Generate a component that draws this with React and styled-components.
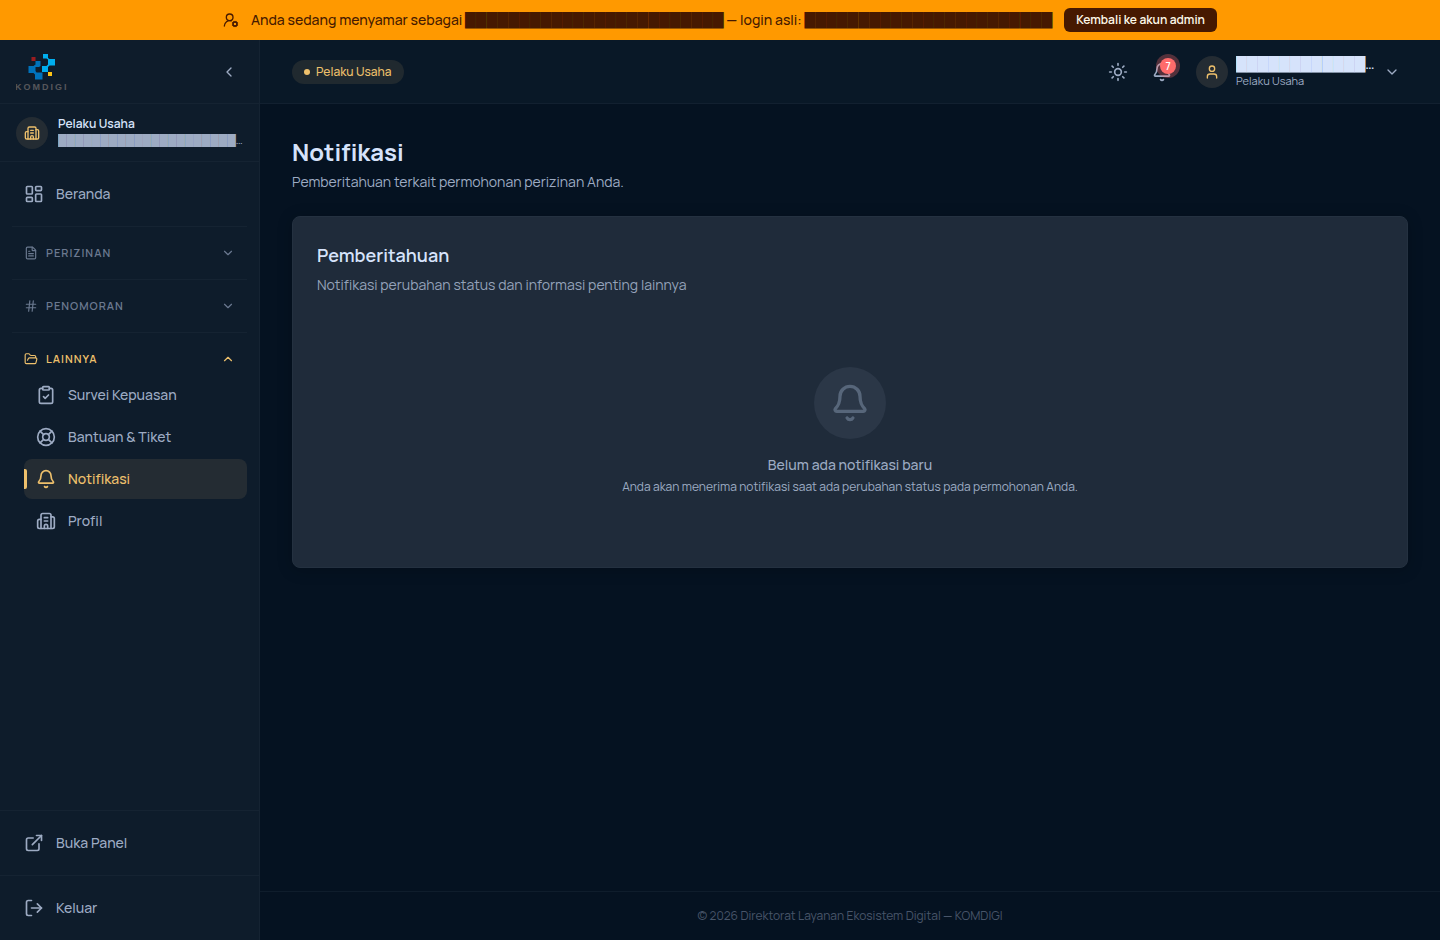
import React, { useState } from "react";
import styled, { createGlobalStyle } from "styled-components";
import {
  Bell,
  Building2,
  ChevronDown,
  ChevronLeft,
  ChevronUp,
  ClipboardCheck,
  ExternalLink,
  FileText,
  FolderOpen,
  Hash,
  LayoutDashboard,
  LifeBuoy,
  LogOut,
  Sun,
  User,
  UserRoundCog,
} from "lucide-react";

const GlobalStyle = createGlobalStyle`
  * {
    box-sizing: border-box;
  }
  body {
    margin: 0;
    background: #051221;
    color: #d6e3fb;
    font-family: "Manrope", "Inter", sans-serif;
    font-size: 14px;
    line-height: 20px;
  }
  h1, h2, p {
    margin: 0;
  }
  button {
    font: inherit;
    color: inherit;
    border: 0;
    padding: 0;
    background: none;
    cursor: pointer;
  }
  a {
    color: inherit;
    text-decoration: none;
  }
`;

const Page = styled.div`
  min-height: 100vh;
  display: flex;
  flex-direction: column;
`;

const Banner = styled.div`
  min-height: 40px;
  padding: 4px 16px;
  display: flex;
  align-items: center;
  justify-content: center;
  gap: 12px;
  background: #ff9900;
  color: #461901;
  font-weight: 500;
`;

const BannerButton = styled.button`
  height: 24px;
  padding: 0 12px;
  border-radius: 6px;
  background: #461901;
  color: #fffbeb;
  font-size: 12px;
  line-height: 16px;
  font-weight: 600;
`;

const Masked = styled.span`
  font-family: "DejaVu Sans", sans-serif;
`;

const Body = styled.div`
  flex: 1;
  display: flex;
`;

const Sidebar = styled.aside`
  width: 260px;
  flex-shrink: 0;
  display: flex;
  flex-direction: column;
  background: #0e1c2b;
  border-right: 1px solid #152332;
  color: #9dabc3;
`;

const SidebarTop = styled.div`
  height: 64px;
  padding: 0 20px 0 16px;
  display: flex;
  align-items: center;
  justify-content: space-between;
  border-bottom: 1px solid #152332;
`;

const CollapseButton = styled.button`
  width: 20px;
  height: 20px;
  display: grid;
  place-items: center;
`;

const Account = styled.div`
  height: 58px;
  padding: 0 16px;
  display: flex;
  align-items: center;
  gap: 10px;
  border-bottom: 1px solid #152332;
`;

const Avatar = styled.span`
  width: 32px;
  height: 32px;
  flex-shrink: 0;
  border-radius: 50%;
  display: grid;
  place-items: center;
  background: #242c33;
  color: #eec06c;
`;

const AccountText = styled.div`
  flex: 1;
  min-width: 0;
`;

const Truncated = styled.div`
  overflow: hidden;
  white-space: nowrap;
  text-overflow: ellipsis;
`;

const AccountName = styled(Truncated)`
  font-size: 12px;
  line-height: 16px;
  font-weight: 600;
  color: #d6e3fb;
`;

const AccountMail = styled(Truncated)`
  font-size: 11px;
  line-height: 16px;
`;

const Nav = styled.nav`
  flex: 1;
  padding: 12px;
`;

const NavLink = styled.a`
  position: relative;
  height: 40px;
  padding: 0 12px;
  display: flex;
  align-items: center;
  gap: 12px;
  border-radius: 8px;
  font-weight: 500;
  color: ${(p) => (p.$active ? "#eec06c" : "#9dabc3")};
  background: ${(p) => (p.$active ? "#242c33" : "transparent")};

  &::before {
    content: "";
    display: ${(p) => (p.$active ? "block" : "none")};
    position: absolute;
    left: 0;
    top: 10px;
    width: 3px;
    height: 20px;
    border-radius: 0 2px 2px 0;
    background: #eec06c;
  }
`;

const Groups = styled.div`
  margin-top: 12px;
`;

const Group = styled.section`
  padding: 10px 0;
  border-top: 1px solid #152332;
`;

const GroupToggle = styled.button`
  width: 100%;
  height: 32px;
  padding: 0 12px;
  display: flex;
  align-items: center;
  gap: 8px;
  font-size: 11px;
  line-height: 16px;
  font-weight: 600;
  letter-spacing: 1px;
  text-transform: uppercase;
  color: ${(p) => (p.$open ? "#eec06c" : "#6b7990")};

  svg:last-child {
    margin-left: auto;
  }
`;

const GroupItems = styled.div`
  padding-left: 12px;
  display: flex;
  flex-direction: column;
  gap: 2px;
`;

const SidebarFoot = styled.div`
  padding: 12px;
  border-top: 1px solid #152332;
`;

const Content = styled.div`
  flex: 1;
  min-width: 0;
  display: flex;
  flex-direction: column;
`;

const Topbar = styled.header`
  height: 64px;
  padding: 0 40px 0 32px;
  display: flex;
  align-items: center;
  justify-content: space-between;
  background: #091827;
  border-bottom: 1px solid #122030;
  color: #9dabc3;
`;

const RoleBadge = styled.span`
  height: 24px;
  padding: 0 12px;
  display: inline-flex;
  align-items: center;
  gap: 6px;
  border-radius: 12px;
  background: #20292f;
  color: #eec06c;
  font-size: 12px;
  line-height: 16px;
  font-weight: 500;

  &::before {
    content: "";
    width: 6px;
    height: 6px;
    border-radius: 50%;
    background: #eec06c;
  }
`;

const Tools = styled.div`
  display: flex;
  align-items: center;
  gap: 24px;
`;

const IconButton = styled.button`
  position: relative;
  width: 20px;
  height: 20px;
  display: grid;
  place-items: center;
`;

const Count = styled.span`
  position: absolute;
  top: -4px;
  right: -4px;
  width: 16px;
  height: 16px;
  border-radius: 50%;
  background: #ff6b6b;
  box-shadow: 0 0 0 4px rgba(255, 107, 107, 0.3);
  color: #ffffff;
  font-size: 10px;
  line-height: 16px;
  font-weight: 600;
`;

const UserMenu = styled.button`
  display: flex;
  align-items: center;
  gap: 8px;
  text-align: left;
`;

const UserText = styled.span`
  width: 140px;
`;

const UserName = styled(Truncated)`
  line-height: 18px;
  font-weight: 500;
  color: #d6e3fb;
`;

const UserRole = styled.div`
  font-size: 11px;
  line-height: 16px;
`;

const Main = styled.main`
  flex: 1;
  padding: 32px;
`;

const Title = styled.h1`
  font-size: 24px;
  line-height: 32px;
  font-weight: 700;
`;

const Subtitle = styled.p`
  margin-top: 4px;
  color: #9dabc3;
`;

const Card = styled.section`
  margin-top: 24px;
  padding: 24px;
  border: 1px solid #243140;
  border-radius: 8px;
  background: #1f2b3a;
  box-shadow: 0 2px 16px rgba(0, 0, 0, 0.2);
`;

const CardTitle = styled.h2`
  font-size: 18px;
  line-height: 28px;
  font-weight: 600;
`;

const CardText = styled.p`
  margin-top: 6px;
  color: #94a2b9;
`;

const Empty = styled.div`
  padding: 72px 0 48px;
  display: flex;
  flex-direction: column;
  align-items: center;
  text-align: center;
  color: #9dabc3;
`;

const EmptyIcon = styled.div`
  width: 72px;
  height: 72px;
  margin-bottom: 16px;
  border-radius: 50%;
  display: grid;
  place-items: center;
  background: #2b3747;
  color: #57667a;
`;

const EmptyTitle = styled.p`
  font-weight: 500;
`;

const EmptyText = styled.p`
  margin-top: 4px;
  font-size: 12px;
  line-height: 16px;
`;

const Footer = styled.footer`
  padding: 16px;
  border-top: 1px solid #0f1d2c;
  text-align: center;
  font-size: 12px;
  line-height: 16px;
  color: #485569;
`;

const groups = [
  { id: "perizinan", label: "Perizinan", icon: FileText, items: [] },
  { id: "penomoran", label: "Penomoran", icon: Hash, items: [] },
  {
    id: "lainnya",
    label: "Lainnya",
    icon: FolderOpen,
    items: [
      { label: "Survei Kepuasan", icon: ClipboardCheck },
      { label: "Bantuan & Tiket", icon: LifeBuoy },
      { label: "Notifikasi", icon: Bell, active: true },
      { label: "Profil", icon: Building2 },
    ],
  },
];

function Logo() {
  return (
    <svg width="54" height="39" viewBox="0 0 54 39" role="img" aria-label="Komdigi">
      <rect x="15.5" y="5" width="4" height="4" fill="#9b1c20" />
      <rect x="32" y="20" width="4" height="4" fill="#fdc416" />
      {/* left arm */}
      <path
        d="M19.5 9h5v5l-1.500 1l-3.500 0v4l1 1.500h6v7h-7.500v-5l-1.500-1.500h-5v-7h5l2-1.500z"
        fill="#0072bc"
      />
      {/* right arm */}
      <path
        d="M27 2h5v4l1.500 1h5.500v6.500h-5.500l-1.500 1.500v5h-6v-6h4.500l1.500-1.500v-5l-1.500-1h-3.500z"
        fill="#00aeef"
      />
      <text
        x="-1"
        y="38"
        fontFamily="Liberation Sans, sans-serif"
        fontSize="9"
        fontWeight="700"
        letterSpacing="2"
        fill="#56575b"
      >
        KOMDIGI
      </text>
    </svg>
  );
}

function NavItem({ icon: Icon, label, active }) {
  return (
    <NavLink href="#" $active={active} aria-current={active ? "page" : undefined}>
      <Icon size={20} />
      {label}
    </NavLink>
  );
}

function NavGroup({ group, open, onToggle }) {
  const Icon = group.icon;
  const Chevron = open ? ChevronUp : ChevronDown;
  return (
    <Group>
      <GroupToggle $open={open} aria-expanded={open} onClick={onToggle}>
        <Icon size={14} />
        {group.label}
        <Chevron size={14} />
      </GroupToggle>
      {open && (
        <GroupItems>
          {group.items.map((item) => (
            <NavItem key={item.label} {...item} />
          ))}
        </GroupItems>
      )}
    </Group>
  );
}

function App() {
  const [openGroup, setOpenGroup] = useState("lainnya");

  return (
    <Page>
      <GlobalStyle />
      <Banner>
        <UserRoundCog size={16} />
        <span>
          Anda sedang menyamar sebagai <Masked>{"█".repeat(24)}</Masked> — login asli:{" "}
          <Masked>{"█".repeat(23)}</Masked>
        </span>
        <BannerButton>Kembali ke akun admin</BannerButton>
      </Banner>
      <Body>
        <Sidebar>
          <SidebarTop>
            <Logo />
            <CollapseButton aria-label="Ciutkan menu">
              <ChevronLeft size={16} />
            </CollapseButton>
          </SidebarTop>
          <Account>
            <Avatar>
              <Building2 size={16} />
            </Avatar>
            <AccountText>
              <AccountName>Pelaku Usaha</AccountName>
              <AccountMail>
                <Masked>{"█".repeat(24)}</Masked>
              </AccountMail>
            </AccountText>
          </Account>
          <Nav>
            <NavItem icon={LayoutDashboard} label="Beranda" />
            <Groups>
              {groups.map((group) => (
                <NavGroup
                  key={group.id}
                  group={group}
                  open={openGroup === group.id}
                  onToggle={() => setOpenGroup(openGroup === group.id ? null : group.id)}
                />
              ))}
            </Groups>
          </Nav>
          <SidebarFoot>
            <NavItem icon={ExternalLink} label="Buka Panel" />
          </SidebarFoot>
          <SidebarFoot>
            <NavItem icon={LogOut} label="Keluar" />
          </SidebarFoot>
        </Sidebar>
        <Content>
          <Topbar>
            <RoleBadge>Pelaku Usaha</RoleBadge>
            <Tools>
              <IconButton aria-label="Ganti tema">
                <Sun size={20} />
              </IconButton>
              <IconButton aria-label="Notifikasi">
                <Bell size={20} />
                <Count>7</Count>
              </IconButton>
              <UserMenu>
                <Avatar>
                  <User size={16} />
                </Avatar>
                <UserText>
                  <UserName>
                    <Masked>{"█".repeat(24)}</Masked>
                  </UserName>
                  <UserRole>Pelaku Usaha</UserRole>
                </UserText>
                <ChevronDown size={16} />
              </UserMenu>
            </Tools>
          </Topbar>
          <Main>
            <Title>Notifikasi</Title>
            <Subtitle>Pemberitahuan terkait permohonan perizinan Anda.</Subtitle>
            <Card>
              <CardTitle>Pemberitahuan</CardTitle>
              <CardText>Notifikasi perubahan status dan informasi penting lainnya</CardText>
              <Empty>
                <EmptyIcon>
                  <Bell size={40} />
                </EmptyIcon>
                <EmptyTitle>Belum ada notifikasi baru</EmptyTitle>
                <EmptyText>
                  Anda akan menerima notifikasi saat ada perubahan status pada permohonan Anda.
                </EmptyText>
              </Empty>
            </Card>
          </Main>
          <Footer>© 2026 Direktorat Layanan Ekosistem Digital — KOMDIGI</Footer>
        </Content>
      </Body>
    </Page>
  );
}

export default App;
